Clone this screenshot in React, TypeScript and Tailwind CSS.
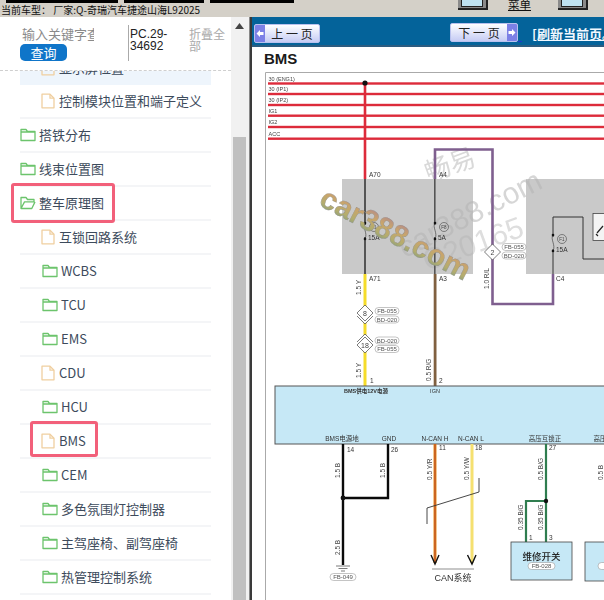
import { ReactNode } from 'react';

const FONT = '"Noto Sans CJK SC", "Liberation Sans", sans-serif';
const DIAGRAM_FONT = '"Liberation Sans", "Noto Sans CJK SC", sans-serif';

type TreeRow = { label: string; icon: 'file' | 'folder' | 'folder-open'; level: 1 | 2; mark?: string };

const rows: TreeRow[] = [
    { label: '控制模块位置和端子定义', icon: 'file', level: 2 },
    { label: '搭铁分布', icon: 'folder', level: 1 },
    { label: '线束位置图', icon: 'folder', level: 1 },
    { label: '整车原理图', icon: 'folder-open', level: 1, mark: 'left-[-9px] top-[-4px] w-[104px] h-[40px]' },
    { label: '互锁回路系统', icon: 'file', level: 2 },
    { label: 'WCBS', icon: 'folder', level: 2 },
    { label: 'TCU', icon: 'folder', level: 2 },
    { label: 'EMS', icon: 'folder', level: 2 },
    { label: 'CDU', icon: 'file', level: 2 },
    { label: 'HCU', icon: 'folder', level: 2 },
    { label: 'BMS', icon: 'file', level: 2, mark: 'left-[10px] top-[-4px] w-[68px] h-[36px]' },
    { label: 'CEM', icon: 'folder', level: 2 },
    { label: '多色氛围灯控制器', icon: 'folder', level: 2 },
    { label: '主驾座椅、副驾座椅', icon: 'folder', level: 2 },
    { label: '热管理控制系统', icon: 'folder', level: 2 },
];

function FileIcon() {
    return (
        <svg width="14" height="16" viewBox="0 0 14 16" fill="none" stroke="#f0cfa0" strokeWidth="1.3" className="shrink-0">
            <path d="M1 1.2h8l4 4v9.600H1z" strokeLinejoin="round" />
            <path d="M9 1.200v4h4" />
        </svg>
    );
}

function FolderIcon({ open }: { open?: boolean }) {
    return (
        <svg width="16" height="14" viewBox="0 0 16 14" fill="none" stroke="#6cc46c" strokeWidth="1.3" className="shrink-0">
            {open ? (
                <path d="M1 12.500V1.500h5l1.500 2H14v2.400H4.500L1 12.500h10.800L15 5.900" strokeLinejoin="round" />
            ) : (
                <path d="M1 12.500V1.500h5l1.500 2H15v9z M1 4h14" strokeLinejoin="round" />
            )}
        </svg>
    );
}

function TreeItem({ row }: { row: TreeRow }) {
    return (
        <div className="relative h-[34px] ml-5 w-[191px] border-b-2 border-[#f4f5f7] flex items-center text-[13px] text-[#3d4b5c]">
            <div className={row.level === 1 ? 'flex items-center gap-[3px]' : row.icon === 'file' ? 'flex items-center gap-[4px] pl-[21px]' : 'flex items-center gap-[3px] pl-[22px]'}>
                {row.icon === 'file' ? <FileIcon /> : <FolderIcon open={row.icon === 'folder-open'} />}
                <span>{row.label}</span>
            </div>
            {row.mark && <div className={`absolute ${row.mark} border-[3px] border-[#f2607a] rounded-[3px]`} />}
        </div>
    );
}

function Sidebar() {
    return (
        <div className="w-[231px] shrink-0 flex flex-col bg-white overflow-hidden">
            <div className="h-[54px] shrink-0 flex border-b border-dashed border-[#cfcfcf]">
                <div className="w-[129px] shrink-0 pl-5 mt-[8px] h-[36px] border-r border-[#aaaaaa]">
                    <div className="w-[74px] h-[17px] mb-[2px] overflow-hidden whitespace-nowrap text-[13px] leading-[17px] text-[#8a8a8a] pl-[2px]">输入关键字查询</div>
                    <button type="button" className="block w-[47px] h-[17px] rounded-[5px] bg-[#0f75c9] text-white text-[13px] leading-[17px]">查询</button>
                </div>
                <div className="w-[40px] ml-[1px] mt-[11px] text-[12px] leading-[12px] text-[#222222]" style={{ fontFamily: '"Liberation Sans", sans-serif' }}>PC.29-34692</div>
                <div className="w-[37px] ml-[19px] mt-[11px] text-[12px] leading-[12px] text-[#aaaaaa]">折叠全部</div>
            </div>
            <div className="flex-1 overflow-hidden">
                <div className="relative h-[34px] ml-5 w-[191px] -mt-[20px] bg-[#eef5fc] flex items-center pl-[21px] gap-[4px] text-[13px] text-[#3d4b5c]">
                    <FileIcon />
                    <span>显示屏位置</span>
                </div>
                {rows.map((row) => (
                    <TreeItem key={row.label} row={row} />
                ))}
                <div className="h-[34px] ml-5 w-[191px]" />
            </div>
        </div>
    );
}

function PagerButton({ dir, children }: { dir: 'prev' | 'next'; children: ReactNode }) {
    const arrow = (
        <span className="w-[10px] self-stretch bg-[#7c80e6] flex items-center justify-center">
            <svg width="8" height="9" viewBox="0 0 8 9" fill="#ffffff">
                <path d={dir === 'prev' ? 'M0.500 4.500L4 1v2h3.500v3H4v2z' : 'M7.500 4.500L4 1v2H0.500v3H4v2z'} />
            </svg>
        </span>
    );
    return (
        <div className="h-[19px] flex items-center border border-[#b9c1ee] rounded-[2px] bg-gradient-to-b from-white to-[#c6ccf4] overflow-hidden">
            {dir === 'prev' && arrow}
            <span className="flex-1 text-center text-[12px] leading-[17px] text-[#222222] whitespace-pre">{children}</span>
            {dir === 'next' && arrow}
        </div>
    );
}

function Pill({ x, y, w = 24, t }: { x: number; y: number; w?: number; t: string }) {
    return (
        <g>
            <rect x={x} y={y - 3.5} width={w} height={7} rx={3.5} fill="#fff" stroke="#888" strokeWidth={0.5} />
            <text x={x + w / 2} y={y + 2} fontSize={6} fill="#555" textAnchor="middle">{t}</text>
        </g>
    );
}

function Diamond({ x, y, n, double }: { x: number; y: number; n: string; double?: 'top' | 'bottom' }) {
    return (
        <g>
            {double === 'bottom' && <path d={`M${x - 8} ${y + 3}L${x} ${y + 11}L${x + 8} ${y + 3}`} fill="#fff" stroke="#444" strokeWidth={0.7} />}
            {double === 'top' && <path d={`M${x - 8} ${y - 3}L${x} ${y - 11}L${x + 8} ${y - 3}`} fill="#fff" stroke="#444" strokeWidth={0.7} />}
            <path d={`M${x} ${y - 8}L${x + 8} ${y}L${x} ${y + 8}L${x - 8} ${y}z`} fill="#fff" stroke="#444" strokeWidth={0.7} />
            <text x={x} y={y + 2.5} fontSize={7} fill="#444" textAnchor="middle">{n}</text>
        </g>
    );
}

function Fuse({ x, y, n, amp }: { x: number; y: number; n: string; amp: string }) {
    return (
        <g>
            <rect x={x - 2} y={y + 2} width={4} height={12} fill="#c9c9c9" />
            <path d={`M${x} ${y}c-3 4 3 10 0 ${16}`} fill="none" stroke="#333" strokeWidth={0.6} />
            <circle cx={x} cy={y} r={1.3} fill="#111" />
            <circle cx={x} cy={y + 16} r={1.3} fill="#111" />
            <circle cx={x + 9} cy={y + 4} r={4.5} fill="none" stroke="#444" strokeWidth={0.6} />
            <text x={x + 9} y={y + 6} fontSize={4.5} fill="#444" textAnchor="middle">{n}</text>
            <text x={x + 3} y={y + 17} fontSize={6.5} fill="#333">{amp}</text>
        </g>
    );
}

function VLabel({ x, y, t }: { x: number; y: number; t: string }) {
    return <text transform={`translate(${x} ${y}) rotate(-90)`} fontSize={6.5} fill="#444">{t}</text>;
}

function Label({ x, y, t, size = 6.5, anchor = 'start', fill = '#333' }: { x: number; y: number; t: string; size?: number; anchor?: 'start' | 'middle'; fill?: string }) {
    return <text x={x} y={y} fontSize={size} fill={fill} textAnchor={anchor}>{t}</text>;
}

function Diagram() {
    const railY = [83.5, 94, 105, 115.7, 127, 138.7];
    const railNames = ['30 (ENG1)', '30 (IP1)', '30 (IP2)', 'IG1', 'IG2', 'ACC'];
    return (
        <svg viewBox="252 72 352 528" className="block w-[352px] h-[528px] blur-[0.25px]" style={{ fontFamily: DIAGRAM_FONT }}>
            <defs>
                <linearGradient id="wm" x1="0" y1="0" x2="0" y2="1">
                    <stop offset="0" stopColor="#a97f98" />
                    <stop offset="0.4" stopColor="#c9a56c" />
                    <stop offset="0.7" stopColor="#b3ad6e" />
                    <stop offset="1" stopColor="#6f9488" />
                </linearGradient>
            </defs>
            <path d="M265.500 600V72.500H604" fill="none" stroke="#aaaaaa" strokeWidth={1} />

            {railY.map((y) => (
                <rect key={y} x={268} y={y - 1.2} width={336} height={2.4} fill="#dd2b3b" />
            ))}
            {railNames.map((t, i) => (
                <Label key={t} x={268.5} y={railY[i] - 3} t={t} size={5.5} fill="#444" />
            ))}

            <rect x={342} y={179} width={131} height={95} fill="#c9c9c9" />
            <rect x={526} y={179} width={78} height={95} fill="#c9c9c9" />

            <text x={450} y={174} fontSize={26} fill="#cccccc" opacity={0.75} textAnchor="middle" transform="rotate(-20 450 165)" style={{ fontFamily: '"Noto Sans CJK SC", sans-serif' }}>畅易</text>
            <text x={470} y={224} fontSize={30} fill="#b5b5b5" opacity={0.55} textAnchor="middle" transform="rotate(-27 470 214)">car388.com</text>
            <text x={473} y={254} fontSize={30} fill="#b5b5b5" opacity={0.45} textAnchor="middle" transform="rotate(-20 473 244)">C20165</text>

            <rect x={363.7} y={83} width={2.6} height={96} fill="#dd2b3b" />
            <circle cx={365} cy={83} r={2.6} fill="#111" />
            <rect x={364} y={179} width={2} height={95} fill="#555" />
            <rect x={363.5} y={274} width={3} height={112} fill="#f5dc2a" />
            <Label x={369} y={177} t="A70" />
            <Label x={369} y={281} t="A71" />
            <Fuse x={365} y={223} n="F1" amp="15A" />
            <VLabel x={361} y={295} t="1.5 Y" />
            <Diamond x={365} y={313} n="8" double="bottom" />
            <Pill x={375} y={311} t="FB-055" />
            <Pill x={375} y={319.5} t="BD-020" />
            <Diamond x={365} y={345} n="18" double="top" />
            <Pill x={375} y={340.5} t="BD-020" />
            <Pill x={375} y={349} t="FB-055" />
            <VLabel x={361} y={378} t="1.5 Y" />
            <Label x={370} y={383} t="1" />

            <path d="M435 179V149.500H492.500V304H553V274" fill="none" stroke="#7f5f8f" strokeWidth={2.6} />
            <rect x={434} y={179} width={1.6} height={95} fill="#555" />
            <rect x={433.7} y={274} width={2.8} height={112} fill="#806040" />
            <Label x={439} y={177} t="A4" />
            <Label x={439} y={281} t="A3" />
            <Fuse x={435} y={223} n="F8" amp="5A" />
            <VLabel x={431} y={381} t="0.5 R/G" />
            <Label x={439} y={383} t="2" />

            <VLabel x={489} y={289} t="1.0 R/L" />
            <Diamond x={492.5} y={252} n="2" />
            <Pill x={502} y={247} t="FB-055" />
            <Pill x={502} y={255.5} t="BD-020" />

            <path d="M553 274V217H583V259H604" fill="none" stroke="#333" strokeWidth={1} />
            <Fuse x={553} y={235} n="F1" amp="15A" />
            <Label x={556} y={281} t="C4" />
            <rect x={593} y={213.5} width={12} height={27} fill="#f4f4f4" stroke="#444" strokeWidth={0.8} />
            <path d="M597 233l6-7M596 234l2 2" stroke="#222" strokeWidth={1.2} />

            <rect x={275} y={386} width={340} height={58} fill="#c6e8f6" stroke="#555" strokeWidth={1} />
            <text x={366} y={393} fontSize={5.5} fill="#333" textAnchor="middle" fontWeight="bold">BMS供电12V电源</text>
            <Label x={435} y={393} t="IGN" size={5.5} anchor="middle" />
            <Label x={342} y={441} t="BMS电源地" size={6.5} anchor="middle" />
            <Label x={389} y={441} t="GND" size={6.5} anchor="middle" />
            <Label x={435} y={441} t="N-CAN H" size={6.5} anchor="middle" />
            <Label x={471} y={441} t="N-CAN L" size={6.5} anchor="middle" />
            <Label x={545} y={441} t="高压互锁正" size={6.5} anchor="middle" />
            <Label x={600} y={441} t="高压" size={6.5} anchor="middle" />

            <path d="M343 444V565M388 444V498H343" fill="none" stroke="#0a0a0a" strokeWidth={2.4} />
            <circle cx={343} cy={498} r={2.4} fill="#111" />
            <Label x={347} y={452} t="14" />
            <Label x={391} y={452} t="26" />
            <VLabel x={340} y={478} t="1.5 B" />
            <VLabel x={385} y={478} t="1.5 B" />
            <VLabel x={340} y={555} t="2.5 B" />
            <path d="M336 566H350M338.500 568.500H347.500M341 571H345" stroke="#444" strokeWidth={0.7} />
            <Pill x={330} y={577} w={26} t="FB-049" />

            <rect x={433.5} y={444} width={3} height={119} fill="#e89020" />
            <rect x={434.5} y={444} width={1} height={119} fill="#b03a20" />
            <rect x={470.5} y={444} width={3} height={119} fill="#f5e070" />
            <path d="M431 555L435 564L439 555M467.500 555L472 564L476 555" fill="none" stroke="#111" strokeWidth={1.4} />
            <Label x={439} y={450} t="11" />
            <Label x={475} y={450} t="18" />
            <VLabel x={432} y={480} t="0.5 Y/R" />
            <VLabel x={469} y={480} t="0.5 Y/W" />
            <path d="M427 524V508L479 492V478" fill="none" stroke="#333" strokeWidth={0.9} />
            <path d="M432 569H474" stroke="#444" strokeWidth={0.6} />
            <text x={453} y={581} fontSize={9} fill="#333" textAnchor="middle">CAN系统</text>

            <path d="M546 444V542M546 501H526V542" fill="none" stroke="#2f7d4f" strokeWidth={2.2} />
            <circle cx={546} cy={501} r={2.2} fill="#111" />
            <Label x={549} y={450} t="27" />
            <VLabel x={543} y={480} t="0.5 B/G" />
            <VLabel x={523} y={530} t="0.35 B/G" />
            <VLabel x={543} y={530} t="0.35 B/G" />
            <Label x={529} y={540} t="1" />
            <Label x={549} y={540} t="3" />
            <VLabel x={603} y={480} t="0.5 B" />

            <rect x={511} y={542} width={61} height={38} fill="#c6e8f6" stroke="#444" strokeWidth={0.8} />
            <text x={541.5} y={560} fontSize={9.5} fontWeight={500} fill="#222" textAnchor="middle">维修开关</text>
            <Pill x={528} y={566} w={27} t="FB-028" />
            <rect x={585} y={542} width={30} height={39} fill="#c6e8f6" stroke="#444" strokeWidth={0.8} />
            <Pill x={598} y={566} w={27} t="FB-0" />

            <text x={395} y={244} fontSize={30} fontWeight="bold" textAnchor="middle" fill="url(#wm)" stroke="#8a8a8a" strokeWidth={0.3} transform="rotate(27.5 395 235)">car388.com</text>
        </svg>
    );
}

function Viewer() {
    return (
        <div className="flex-1 min-w-0 flex flex-col bg-white overflow-hidden">
            <div className="h-[30px] shrink-0 bg-[#04639a] border-b-2 border-[#2c5c80] flex items-start pt-[7px] pl-[2px]">
                <div className="w-[66px] shrink-0">
                    <PagerButton dir="prev">{'上 一 页'}</PagerButton>
                </div>
                <div className="w-[68px] ml-[130px] -mt-[1px] shrink-0">
                    <PagerButton dir="next">{'下 一 页'}</PagerButton>
                </div>
                <div className="w-[4px] h-[18px] border-b border-[#2233cc] shrink-0" />
                <span className="ml-[10px] text-[13px] leading-[19px] font-bold text-[#f2f8ff] underline whitespace-nowrap">[刷新当前页。</span>
            </div>
            <div className="h-[25px] shrink-0 pl-3 flex items-center text-[15px] font-bold text-[#1a1a1a]" style={{ fontFamily: '"Liberation Sans", sans-serif' }}>BMS</div>
            <Diagram />
        </div>
    );
}

function WindowIcon() {
    return (
        <div className="w-[30px] h-[10px] bg-[#8a8a8a] border-b-2 border-r-2 border-[#222222] px-[3px] pb-[1px] shrink-0">
            <div className="h-full bg-[#bfe3f2] border border-[#222222] border-t-0" />
        </div>
    );
}

export default function App() {
    return (
        <div className="w-[604px] h-[600px] overflow-hidden flex flex-col bg-[#d4d0c8]" style={{ fontFamily: FONT }}>
            <div className="h-[17px] shrink-0 flex">
                <div className="w-[298px] shrink-0">
                    <div className="h-[3px] flex gap-[6px] pl-[6px]">
                        <div className="w-[112px] bg-black" />
                        <div className="w-[80px] bg-black" />
                        <div className="w-[84px] bg-black" />
                    </div>
                    <div className="pl-[1px] text-[10px] leading-[14px] text-[#111111] whitespace-nowrap">当前车型： 厂家:Q-奇瑞汽车捷途山海L92025</div>
                </div>
                <div className="flex-1 flex items-start pl-[160px]">
                    <WindowIcon />
                    <span className="ml-5 text-[11.5px] leading-[14px] -mt-[3px] text-[#111111] underline">菜单</span>
                    <span className="w-[27px] shrink-0" />
                    <WindowIcon />
                </div>
            </div>
            <div className="flex-1 min-h-0 flex">
                <Sidebar />
                <div className="w-[18px] shrink-0 bg-[#f1f1f1] relative flex flex-col items-center">
                    <svg width="9" height="6" viewBox="0 0 9 6" className="mt-[6px] ml-[-1px]" fill="#444444"><path d="M4.500 0L9 6H0z" /></svg>
                    <div className="mt-[108px] w-[13px] flex-1 ml-[-1px] bg-[#c0c0c0]" />
                </div>
                <div className="w-[3px] shrink-0 bg-[#3a3a3a] border-l border-[#888888]" />
                <Viewer />
            </div>
        </div>
    );
}
